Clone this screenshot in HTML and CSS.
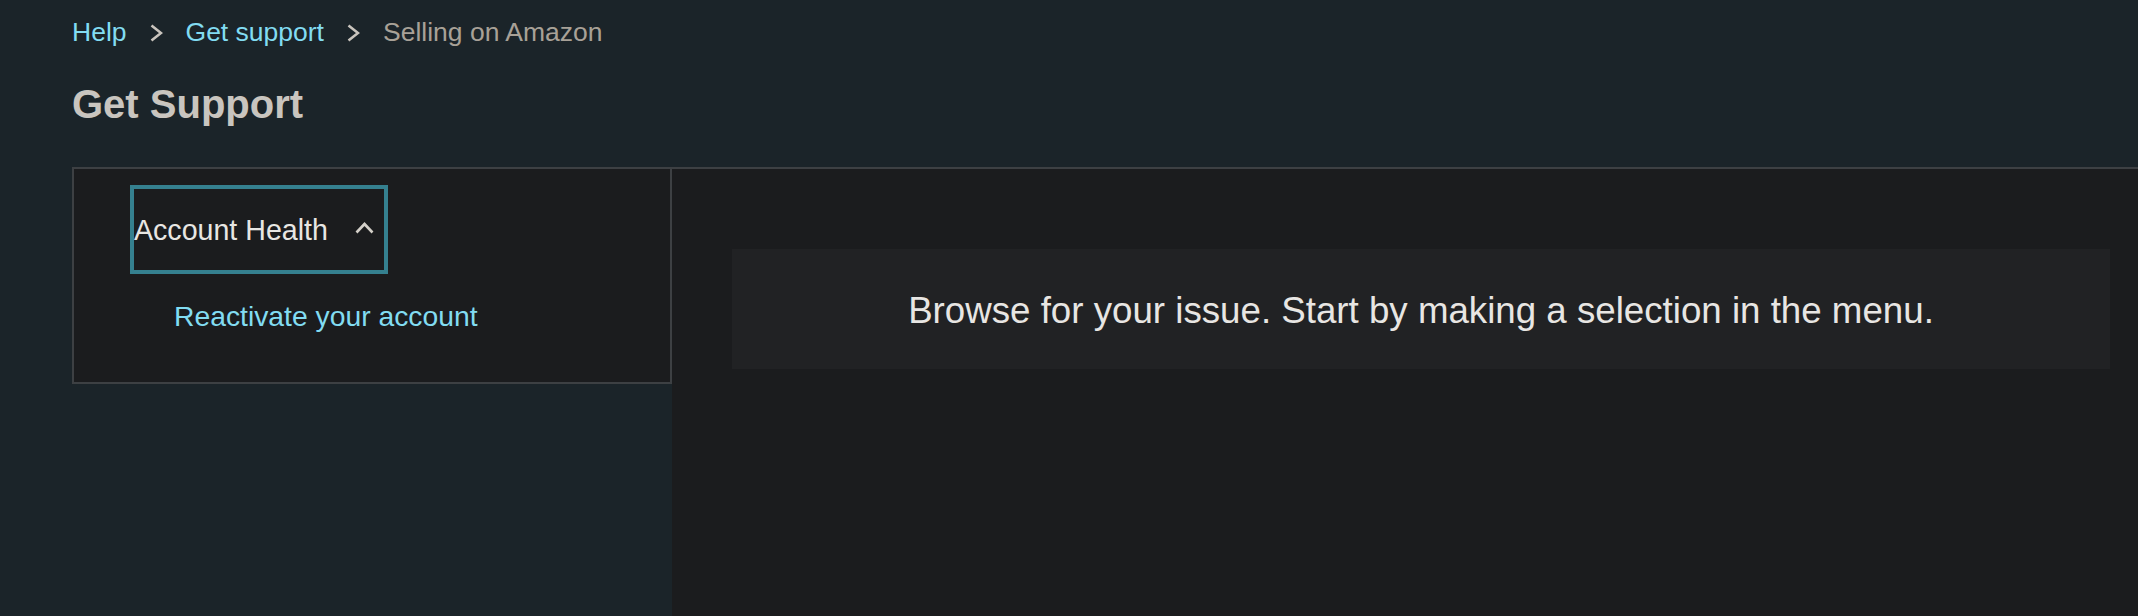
FILE: index.html
```html
<!DOCTYPE html>
<html lang="en">
<head>
<meta charset="utf-8">
<title>Get Support</title>
<link rel="stylesheet" href="styles.css">
</head>
<body>
<header class="page-header">
  <nav class="breadcrumb">
    <a class="crumb-link" href="#">Help</a>
    <svg class="crumb-sep" width="13" height="18" viewBox="0 0 13 18"><polyline points="1.5,1.5 11,9 1.5,16.5" fill="none" stroke="currentColor" stroke-width="2.6"/></svg>
    <a class="crumb-link" href="#">Get support</a>
    <svg class="crumb-sep" width="13" height="18" viewBox="0 0 13 18"><polyline points="1.5,1.5 11,9 1.5,16.5" fill="none" stroke="currentColor" stroke-width="2.6"/></svg>
    <span class="crumb-current">Selling on Amazon</span>
  </nav>
  <h1 class="page-title">Get Support</h1>
</header>
<main class="support">
  <aside class="menu">
    <button class="menu-toggle" type="button">
      <span class="menu-toggle-label">Account Health</span>
      <svg class="menu-toggle-icon" width="19" height="12" viewBox="0 0 19 12"><polyline points="1.5,10.5 9.5,2 17.5,10.5" fill="none" stroke="currentColor" stroke-width="2.6"/></svg>
    </button>
    <a class="menu-item" href="#">Reactivate your account</a>
  </aside>
  <section class="content">
    <div class="placeholder">Browse for your issue. Start by making a selection in the menu.</div>
  </section>
</main>
</body>
</html>
```
FILE: styles.css
```css
html, body {
  margin: 0;
  padding: 0;
}
body {
  background: #1b2429;
  font-family: "Liberation Sans", Arial, sans-serif;
  color: #e8e6e3;
  height: 616px;
  overflow: hidden;
}
a {
  text-decoration: none;
}
.page-header {
  padding: 17px 0 0 72px;
}
.breadcrumb {
  display: flex;
  align-items: center;
  gap: 23px;
  font-size: 26.5px;
  line-height: 30px;
  height: 30px;
}
.crumb-link {
  color: #82dcf2;
}
.crumb-sep {
  color: #c9c4bd;
  display: block;
  margin-top: 2px;
}
.crumb-current {
  color: #a8a197;
}
.page-title {
  margin: 34px 0 0;
  font-size: 40px;
  line-height: 46px;
  font-weight: bold;
  color: #c9c5bf;
}
.support {
  display: flex;
  align-items: flex-start;
  margin: 40px 0 0 72px;
  height: 449px;
}
.menu {
  width: 600px;
  flex: none;
  box-sizing: border-box;
  border: 2px solid #3d4043;
  background: #1b1c1e;
  padding: 16px 0 50px 56px;
  display: flex;
  flex-direction: column;
  align-items: flex-start;
}
.menu-toggle {
  display: flex;
  align-items: center;
  width: 258px;
  height: 89px;
  box-sizing: border-box;
  border: 4px solid #35808f;
  background: transparent;
  padding: 0 10px 0 0;
  margin: 0;
  font-family: inherit;
  font-size: 28.6px;
  line-height: 32px;
  color: #e8e6e3;
  cursor: pointer;
}
.menu-toggle-label {
  flex: 1;
  text-align: left;
}
.menu-toggle-icon {
  display: block;
  color: #d4d0c9;
  margin-top: -4px;
}
.menu-item {
  margin: 26px 0 0 44px;
  font-size: 28.3px;
  line-height: 32px;
  color: #82dcf2;
}
.content {
  flex: 1;
  align-self: stretch;
  box-sizing: border-box;
  border-top: 2px solid #3d4043;
  background: #1b1c1e;
  padding: 80px 28px 0 60px;
}
.placeholder {
  background: #212224;
  height: 120px;
  box-sizing: border-box;
  padding-top: 41px;
  text-align: center;
  font-size: 36.7px;
  line-height: 42px;
  color: #e8e6e3;
}
```
